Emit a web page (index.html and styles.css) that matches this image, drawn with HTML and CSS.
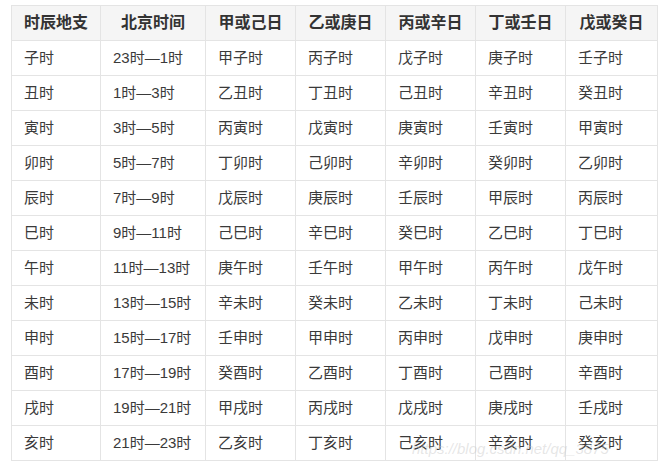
FILE: index.html
```html
<!DOCTYPE html>
<html lang="zh">
<head>
<meta charset="utf-8">
<title>时辰对照表</title>
<link rel="stylesheet" href="styles.css">
</head>
<body>
<div class="page">
  <table class="tbl">
    <colgroup>
      <col class="c1"><col class="c2"><col class="c3"><col class="c3"><col class="c3"><col class="c3"><col class="c7">
    </colgroup>
    <thead>
      <tr><th>时辰地支</th><th>北京时间</th><th>甲或己日</th><th>乙或庚日</th><th>丙或辛日</th><th>丁或壬日</th><th>戊或癸日</th></tr>
    </thead>
    <tbody>
      <tr><td>子时</td><td>23时—1时</td><td>甲子时</td><td>丙子时</td><td>戊子时</td><td>庚子时</td><td>壬子时</td></tr>
      <tr><td>丑时</td><td>1时—3时</td><td>乙丑时</td><td>丁丑时</td><td>己丑时</td><td>辛丑时</td><td>癸丑时</td></tr>
      <tr><td>寅时</td><td>3时—5时</td><td>丙寅时</td><td>戊寅时</td><td>庚寅时</td><td>壬寅时</td><td>甲寅时</td></tr>
      <tr><td>卯时</td><td>5时—7时</td><td>丁卯时</td><td>己卯时</td><td>辛卯时</td><td>癸卯时</td><td>乙卯时</td></tr>
      <tr><td>辰时</td><td>7时—9时</td><td>戊辰时</td><td>庚辰时</td><td>壬辰时</td><td>甲辰时</td><td>丙辰时</td></tr>
      <tr><td>巳时</td><td>9时—11时</td><td>己巳时</td><td>辛巳时</td><td>癸巳时</td><td>乙巳时</td><td>丁巳时</td></tr>
      <tr><td>午时</td><td>11时—13时</td><td>庚午时</td><td>壬午时</td><td>甲午时</td><td>丙午时</td><td>戊午时</td></tr>
      <tr><td>未时</td><td>13时—15时</td><td>辛未时</td><td>癸未时</td><td>乙未时</td><td>丁未时</td><td>己未时</td></tr>
      <tr><td>申时</td><td>15时—17时</td><td>壬申时</td><td>甲申时</td><td>丙申时</td><td>戊申时</td><td>庚申时</td></tr>
      <tr><td>酉时</td><td>17时—19时</td><td>癸酉时</td><td>乙酉时</td><td>丁酉时</td><td>己酉时</td><td>辛酉时</td></tr>
      <tr><td>戌时</td><td>19时—21时</td><td>甲戌时</td><td>丙戌时</td><td>戊戌时</td><td>庚戌时</td><td>壬戌时</td></tr>
      <tr><td>亥时</td><td>21时—23时</td><td>乙亥时</td><td>丁亥时</td><td>己亥时</td><td>辛亥时</td><td>癸亥时</td></tr>
    </tbody>
  </table>
  <div class="watermark">https://blog.csdn.net/qq_3875</div>
</div>
</body>
</html>
```

FILE: styles.css
```css
html, body {
  margin: 0;
  padding: 0;
  background: #ffffff;
}

.page {
  position: relative;
  padding: 5px 0 0 11px;
  font-family: "Liberation Sans", "Noto Sans CJK SC", sans-serif;
  color: #333333;
}

.tbl {
  border-collapse: collapse;
  table-layout: fixed;
  width: 646px;
}

.c1 { width: 89px; }
.c2 { width: 105px; }
.c3 { width: 90px; }
.c7 { width: 92px; }

.tbl th,
.tbl td {
  border: 1px solid #e4e4e4;
  height: 35px;
  padding: 0 12px;
  box-sizing: border-box;
  white-space: nowrap;
  vertical-align: middle;
  line-height: 20px;
}

.tbl th {
  background: #f5f5f5;
  font-size: 16px;
  font-weight: bold;
  text-align: center;
  color: #333333;
}

.tbl td {
  font-size: 15px;
  text-align: left;
  color: #3a3a3a;
}

.watermark {
  position: absolute;
  left: 412px;
  top: 440px;
  font-size: 15px;
  font-style: italic;
  color: rgba(200, 200, 200, 0.45);
  pointer-events: none;
}
```
